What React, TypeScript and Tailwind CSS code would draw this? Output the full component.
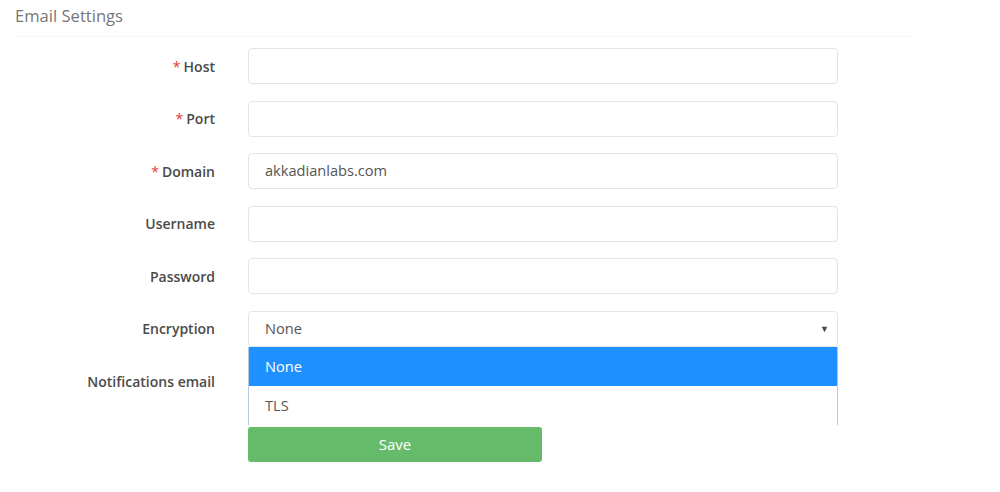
const fields = [
  { label: "Host", required: true, value: "" },
  { label: "Port", required: true, value: "" },
  { label: "Domain", required: true, value: "akkadianlabs.com" },
  { label: "Username", required: false, value: "" },
  { label: "Password", required: false, value: "" },
];

const Label = ({ text, required }: { text: string; required?: boolean }) => (
  <div className="w-[200px] shrink-0 text-right text-[14px] font-semibold text-[#4a4a4a]">
    {required && <span className="mr-[3px] font-normal text-[#e53935]">*</span>}
    {text}
  </div>
);

export default function App() {
  return (
    <div
      className="h-[492px] w-[1000px] bg-white px-[15px]"
      style={{ fontFamily: '"Open Sans", "Liberation Sans", sans-serif' }}
    >
      <div className="w-[898px] border-b border-dotted border-[#eeeeee] pb-[8px] pt-[4px] text-[16.6px] leading-[24px] text-[#777]">
        Email Settings
      </div>

      <div className="mt-[11px] flex flex-col gap-y-[16.6px]">
        {fields.map((f) => (
          <div key={f.label} className="flex items-center gap-[33px]">
            <Label text={f.label} required={f.required} />
            <div className="flex h-[36px] w-[590px] items-center rounded-[4px] border border-[#e4e4e4] px-[16px] text-[14.6px] text-[#555]">
              {f.value}
            </div>
          </div>
        ))}

        <div className="flex items-center gap-[33px]">
          <Label text="Encryption" />
          <div className="relative w-[590px]">
            <div className="flex h-[36px] items-center justify-between rounded-[4px] border border-[#e4e4e4] pl-[16px] pr-[8px] text-[14.6px] text-[#555]">
              <span>None</span>
              <span className="text-[9px] text-[#444]">▼</span>
            </div>
            <div className="absolute left-0 top-[36px] z-10 w-[590px] border-x border-[#b9c7e0] bg-white text-[14.6px]">
              <div className="flex h-[39px] items-center bg-[#1e90ff] px-[16px] text-white">None</div>
              <div className="flex h-[39px] items-center px-[16px] text-[#555]">TLS</div>
            </div>
          </div>
        </div>

        <div className="flex items-center gap-[33px]">
          <Label text="Notifications email" />
          <div className="h-[36px] w-[590px] rounded-[4px] border border-[#e4e4e4]" />
        </div>
      </div>

      <div className="ml-[233px] mt-[27px]">
        <button className="h-[35px] w-[294px] rounded-[3px] bg-[#66bb6a] text-[15px] text-white">
          Save
        </button>
      </div>
    </div>
  );
}
